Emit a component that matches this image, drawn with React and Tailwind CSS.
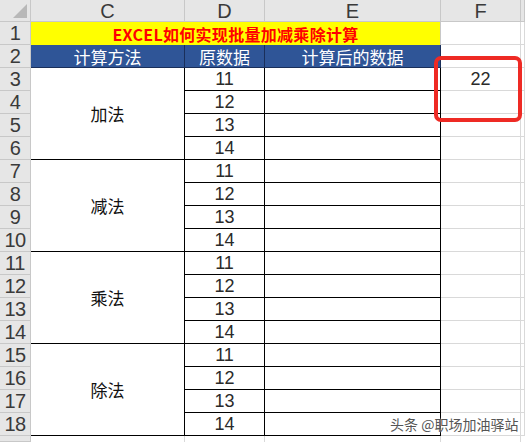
import React from 'react';

const groups = [
  { name: '加法', cls: 'row-start-4' },
  { name: '减法', cls: 'row-start-8' },
  { name: '乘法', cls: 'row-start-12' },
  { name: '除法', cls: 'row-start-16' },
];

// full class names so Tailwind picks them up
const rowStart = [
  'row-start-1', 'row-start-2', 'row-start-3', 'row-start-4', 'row-start-5',
  'row-start-6', 'row-start-7', 'row-start-8', 'row-start-9', 'row-start-10',
  'row-start-11', 'row-start-12', 'row-start-13', 'row-start-14', 'row-start-15',
  'row-start-16', 'row-start-17', 'row-start-18', 'row-start-19', 'row-start-20',
];
const colStart = ['col-start-1', 'col-start-2', 'col-start-3', 'col-start-4', 'col-start-5', 'col-start-6'];

const cjk = "font-['Noto_Sans_CJK_SC','Noto_Sans',sans-serif]";
const num = "font-['Liberation_Sans','Noto_Sans_CJK_SC',sans-serif]";

const headCell = `flex items-center justify-center bg-[#e6e6e6] border-r border-b border-[#c8c8c8] text-[#3a3a3a] leading-none ${num}`;
const gridCell = 'border-r border-b border-[#d9d9d9] bg-white';

const App = () => {
  const rows = Array.from({ length: 18 }, (_, i) => i + 1);

  return (
    <div className="relative w-[525px] h-[442px] overflow-hidden bg-white">
      <div className="grid h-full grid-cols-[31px_154px_80px_176px_80px_1fr] grid-rows-[22px_repeat(18,23px)_1fr]">
        {/* Column headers */}
        <div className={`${headCell} relative row-start-1 col-start-1`}>
          <svg className="absolute right-[3px] bottom-[3px]" width="14" height="14" viewBox="0 0 14 14">
            <polygon points="14,0 14,14 0,14" fill="#b8b8b8" />
          </svg>
        </div>
        {['C', 'D', 'E', 'F', ''].map((c, i) => (
          <div key={c + i} className={`${headCell} text-[20px] row-start-1 ${colStart[i + 1]}`}>
            {c}
          </div>
        ))}

        {/* Row headers */}
        {rows.map((r) => (
          <div key={r} className={`${headCell} text-[20px] tracking-[-0.5px] col-start-1 ${rowStart[r]}`}>
            {r}
          </div>
        ))}
        <div className={`${headCell} row-start-20 col-start-1`} />

        {/* Row 1 title */}
        <div className={`row-start-2 col-start-2 col-span-3 flex items-center justify-center overflow-hidden bg-[#ffff00] border-r border-[#c8c8c8] text-[#ff0000] font-bold text-[16px] leading-none tracking-[0.3px] ${cjk}`}>
          EXCEL如何实现批量加减乘除计算
        </div>

        {/* Row 2 header */}
        {['计算方法', '原数据', '计算后的数据'].map((t, i) => (
          <div
            key={t}
            className={`row-start-3 ${colStart[i + 1]} flex items-center justify-center bg-[#2f5597] border-r border-b border-[#1a2f5a] text-white text-[17px] leading-none ${cjk}`}
          >
            {t}
          </div>
        ))}

        {/* Merged method cells */}
        {groups.map((g) => (
          <div
            key={g.name}
            className={`${g.cls} row-span-4 col-start-2 flex items-center justify-center border-r border-b border-black bg-white text-[17px] text-[#111] ${cjk}`}
          >
            {g.name}
          </div>
        ))}

        {/* D and E data cells */}
        {rows.slice(2).map((r) => (
          <React.Fragment key={r}>
            <div className={`${rowStart[r]} col-start-3 flex items-center justify-center border-r border-b border-black bg-white text-[18px] leading-none text-[#2a2a2a] ${num}`}>
              {11 + ((r - 3) % 4)}
            </div>
            <div className={`${rowStart[r]} col-start-4 border-r border-b border-black bg-white`} />
          </React.Fragment>
        ))}

        {/* F and G columns */}
        {rows.map((r) => (
          <React.Fragment key={'fg' + r}>
            <div className={`${rowStart[r]} col-start-5 ${gridCell} flex items-center justify-center text-[18px] leading-none text-[#2a2a2a] ${num}`}>
              {r === 3 ? '22' : ''}
            </div>
            <div className={`${rowStart[r]} col-start-6 ${gridCell}`} />
          </React.Fragment>
        ))}

        {/* Last partial row */}
        <div className="row-start-20 col-start-2 border-r border-[#d9d9d9] bg-white" />
        <div className="row-start-20 col-start-3 border-r border-[#d9d9d9] bg-white" />
        <div className="row-start-20 col-start-4 border-r border-[#d9d9d9] bg-white" />
        <div className="row-start-20 col-start-5 border-r border-[#d9d9d9] bg-white" />
        <div className="row-start-20 col-start-6 bg-white" />
      </div>

      {/* Red highlight box */}
      <div className="absolute left-[434px] top-[56px] w-[88px] h-[66px] border-4 border-[#ee2a24] rounded-[7px]" />

      {/* Watermark */}
      <div className={`absolute left-[390px] top-[417px] whitespace-nowrap text-[14px] leading-none text-[#555] ${cjk} [text-shadow:0_0_2px_#fff]`}>
        头条 @职场加油驿站
      </div>
    </div>
  );
};

export default App;
